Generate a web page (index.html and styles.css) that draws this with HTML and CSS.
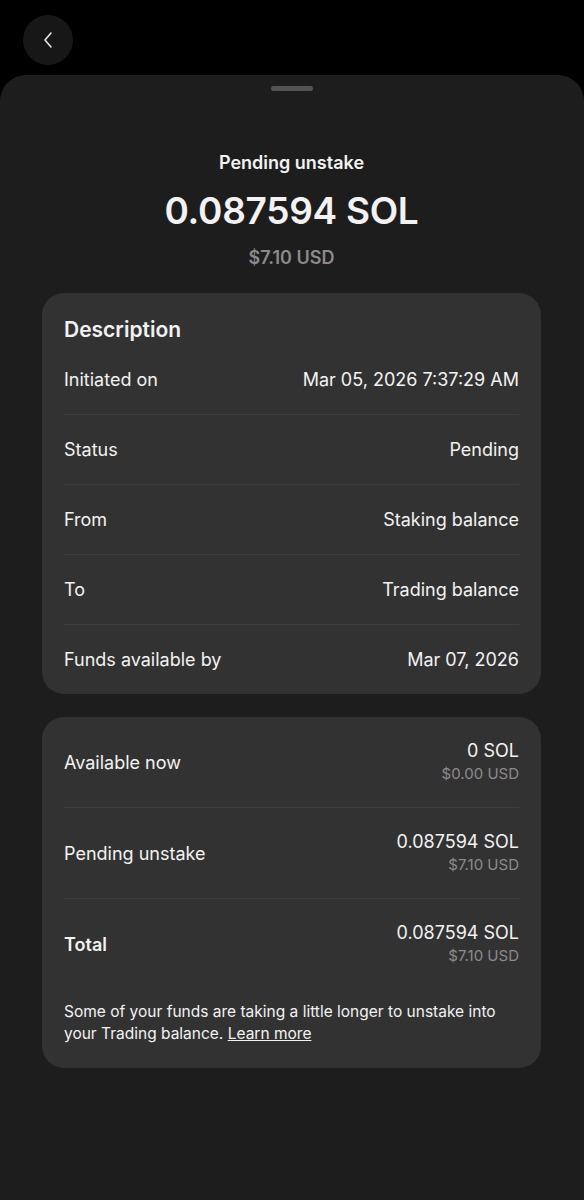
FILE: index.html
```html
<!DOCTYPE html>
<html lang="en">
<head>
  <meta charset="UTF-8" />
  <meta name="viewport" content="width=device-width, initial-scale=1.0"/>
  <title>Pending unstake</title>
  <link rel="stylesheet" href="styles.css">
</head>
<body>
  <div class="topbar">
    <button class="back" aria-label="Back">
      <svg width="12" height="18" viewBox="0 0 12 18" fill="none">
        <path d="M9 2L3 9l6 7" stroke="#e6e6e6" stroke-width="1.6" stroke-linecap="round" stroke-linejoin="round"/>
      </svg>
    </button>
  </div>

  <div class="sheet">
    <div class="handle"></div>

    <div class="summary">
      <div class="summary-label">Pending unstake</div>
      <div class="summary-amount">0.087594 SOL</div>
      <div class="summary-usd">$7.10 USD</div>
    </div>

    <div class="card">
      <h2 class="card-title">Description</h2>
      <div class="row">
        <span>Initiated on</span>
        <span>Mar 05, 2026 7:37:29 AM</span>
      </div>
      <div class="row">
        <span>Status</span>
        <span>Pending</span>
      </div>
      <div class="row">
        <span>From</span>
        <span>Staking balance</span>
      </div>
      <div class="row">
        <span>To</span>
        <span>Trading balance</span>
      </div>
      <div class="row">
        <span>Funds available by</span>
        <span>Mar 07, 2026</span>
      </div>
    </div>

    <div class="card">
      <div class="row tall">
        <span>Available now</span>
        <div class="value">
          <div>0 SOL</div>
          <div class="usd">$0.00 USD</div>
        </div>
      </div>
      <div class="row tall">
        <span>Pending unstake</span>
        <div class="value">
          <div>0.087594 SOL</div>
          <div class="usd">$7.10 USD</div>
        </div>
      </div>
      <div class="row tall">
        <span class="strong">Total</span>
        <div class="value">
          <div>0.087594 SOL</div>
          <div class="usd">$7.10 USD</div>
        </div>
      </div>
      <p class="note">Some of your funds are taking a little longer to unstake into your Trading balance. <a href="#">Learn more</a></p>
    </div>
  </div>
</body>
</html>
```

FILE: styles.css
```css
body {
  font-family: Inter, "Liberation Sans", sans-serif;
  background-color: #000;
  color: #f2f2f2;
  margin: 0;
  padding: 0;
}

.topbar {
  height: 75px;
  padding: 15px 0 0 23px;
  box-sizing: border-box;
}

.back {
  width: 50px;
  height: 50px;
  border-radius: 50%;
  border: none;
  background-color: #171717;
  display: flex;
  align-items: center;
  justify-content: center;
  padding: 0;
  cursor: pointer;
}

.sheet {
  background-color: #1e1d1e;
  border-radius: 26px 26px 0 0;
  min-height: 1125px;
  padding: 11px 43px 0 42px;
  box-sizing: border-box;
}

.handle {
  width: 42px;
  height: 5px;
  border-radius: 3px;
  background-color: #545354;
  margin: 0 auto;
}

.summary {
  text-align: center;
  padding-top: 60px;
  padding-bottom: 23px;
}

.summary-label {
  font-size: 18px;
  font-weight: 600;
  line-height: 24px;
}

.summary-amount {
  font-size: 37px;
  font-weight: 600;
  line-height: 48px;
  margin-top: 12px;
  letter-spacing: -0.3px;
}

.summary-usd {
  font-size: 18px;
  font-weight: 600;
  line-height: 24px;
  color: #8b8a8b;
  margin-top: 11px;
}

.card {
  background-color: #333233;
  border-radius: 22px;
  padding: 0 22px;
  margin-bottom: 23px;
}

.card-title {
  margin: 0;
  padding-top: 23px;
  font-size: 21px;
  font-weight: 600;
  line-height: 28px;
}

.row {
  display: flex;
  justify-content: space-between;
  align-items: center;
  height: 70px;
  font-size: 18px;
  border-top: 1px solid #3e3d3e;
  box-sizing: border-box;
}

.card-title + .row {
  border-top: none;
}

.row.tall {
  height: 91px;
}

.row.tall:first-child {
  border-top: none;
  height: 90px;
}

.value {
  text-align: right;
  line-height: 24px;
}

.usd {
  font-size: 15px;
  line-height: 22px;
  color: #8b8a8b;
}

.strong {
  font-weight: 600;
}

.note {
  margin: 0;
  padding: 12px 0 23px;
  font-size: 15.5px;
  line-height: 22px;
}

.note a {
  color: #f2f2f2;
}
```
